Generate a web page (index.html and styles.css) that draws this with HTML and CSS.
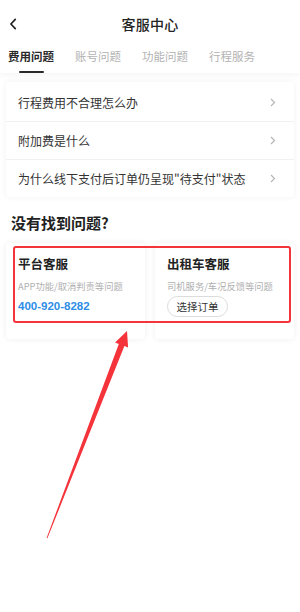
FILE: index.html
```html
<!DOCTYPE html>
<html lang="zh">
<head>
<meta charset="utf-8">
<title>客服中心</title>
<link rel="stylesheet" href="styles.css">
</head>
<body>
<div class="page">
  <header class="header">
    <svg class="back" width="8" height="12" viewBox="0 0 8 12"><path d="M6.3 1.3 L1.9 6 L6.3 10.7" fill="none" stroke="#222" stroke-width="1.7" stroke-linecap="round" stroke-linejoin="round"/></svg>
    <h1 class="title">客服中心</h1>
  </header>
  <nav class="tabs">
    <div class="tab active">费用问题</div>
    <div class="tab">账号问题</div>
    <div class="tab">功能问题</div>
    <div class="tab">行程服务</div>
  </nav>
  <div class="list">
    <div class="row"><span>行程费用不合理怎么办</span><svg class="chev" width="6" height="9" viewBox="0 0 6 9"><path d="M1 1 L4.5 4.5 L1 8" fill="none" stroke="#b5b5b5" stroke-width="1.2"/></svg></div>
    <div class="row"><span>附加费是什么</span><svg class="chev" width="6" height="9" viewBox="0 0 6 9"><path d="M1 1 L4.5 4.5 L1 8" fill="none" stroke="#b5b5b5" stroke-width="1.2"/></svg></div>
    <div class="row"><span>为什么线下支付后订单仍呈现"待支付"状态</span><svg class="chev" width="6" height="9" viewBox="0 0 6 9"><path d="M1 1 L4.5 4.5 L1 8" fill="none" stroke="#b5b5b5" stroke-width="1.2"/></svg></div>
  </div>
  <h2 class="section">没有找到问题?</h2>
  <div class="cards">
    <div class="card">
      <div class="card-title">平台客服</div>
      <div class="card-sub">APP功能/取消判责等问题</div>
      <div class="phone">400-920-8282</div>
    </div>
    <div class="card">
      <div class="card-title">出租车客服</div>
      <div class="card-sub">司机服务/车况反馈等问题</div>
      <div class="btn">选择订单</div>
    </div>
    <div class="mark"></div>
  </div>
  <svg class="arrow" width="300" height="612" viewBox="0 0 300 612">
    <polygon points="46.6,538 118.8,343.9 115.1,342.5 127,331 128.1,347.5 124.4,346.1 47.4,538.3" fill="#f5333a"/>
  </svg>
</div>
</body>
</html>
```
FILE: styles.css
```css
* { box-sizing: border-box; }
html, body { margin: 0; padding: 0; background: #fff; }
body {
  font-family: "Noto Sans CJK SC", "Noto Sans", sans-serif;
  color: #222;
  width: 300px;
  height: 612px;
  overflow: hidden;
}
.page { position: relative; width: 300px; height: 612px; }
.header {
  height: 48px;
  display: flex;
  align-items: center;
  justify-content: center;
  position: relative;
}
.back { position: absolute; left: 9px; top: 18px; }
.title {
  margin: 0;
  font-size: 14px;
  font-weight: 500;
  line-height: 18px;
  color: #222;
  letter-spacing: 0.3px;
}
.tabs {
  display: flex;
  gap: 21px;
  padding-left: 8px;
  height: 25px;
  box-shadow: 0 3px 6px rgba(0,0,0,0.035);
  position: relative;
}
.tab {
  font-size: 11.5px;
  line-height: 16px;
  color: #b3b3b3;
  display: flex;
  flex-direction: column;
  align-items: center;
}
.tab.active { color: #2a2a2a; font-weight: 700; }
.tab.active::after {
  content: "";
  width: 25px;
  height: 2px;
  border-radius: 1px;
  background: #2a2a2a;
  margin-top: 6.5px;
}
.list {
  margin: 9px 6px 0;
  background: #fff;
  border-radius: 4px;
  box-shadow: 0 0 6px rgba(0,0,0,0.06);
  padding-top: 1px;
}
.row {
  height: 38px;
  display: flex;
  align-items: center;
  justify-content: space-between;
  padding: 0 18px 0 12px;
  font-size: 12px;
  color: #333;
  border-top: 1px solid #f1f1f1;
}
.row:first-child { border-top: none; }
.chev { display: block; }
.section {
  margin: 16px 0 0 11px;
  font-size: 15px;
  line-height: 20px;
  font-weight: 700;
  color: #222;
}
.cards {
  position: relative;
  display: grid;
  grid-template-columns: 1fr 1fr;
  gap: 10px;
  margin: 10px 6px 0;
}
.card {
  height: 96px;
  background: #fff;
  border-radius: 4px;
  box-shadow: 0 0 6px rgba(0,0,0,0.07);
  padding: 12px 0 0 12px;
}
.card-title {
  font-size: 12.5px;
  line-height: 18px;
  font-weight: 700;
  color: #222;
}
.card-sub {
  margin-top: 6.5px;
  font-size: 9.3px;
  line-height: 12px;
  color: #b0b0b0;
  white-space: nowrap;
}
.phone {
  margin-top: 7.5px;
  font-family: "Liberation Sans", "Noto Sans", sans-serif;
  font-size: 11.5px;
  line-height: 14px;
  font-weight: 700;
  color: #2e8de6;
}
.btn {
  margin-top: 4.5px;
  display: inline-flex;
  align-items: center;
  justify-content: center;
  width: 61px;
  height: 21px;
  border: 1px solid #dcdcdc;
  border-radius: 11px;
  font-size: 10.5px;
  color: #333;
}
.mark {
  position: absolute;
  left: 7px;
  top: 3px;
  width: 278px;
  height: 77px;
  border: 2px solid #f5333a;
  border-radius: 3px;
  pointer-events: none;
}
.arrow { position: absolute; left: 0; top: 0; pointer-events: none; }
```
